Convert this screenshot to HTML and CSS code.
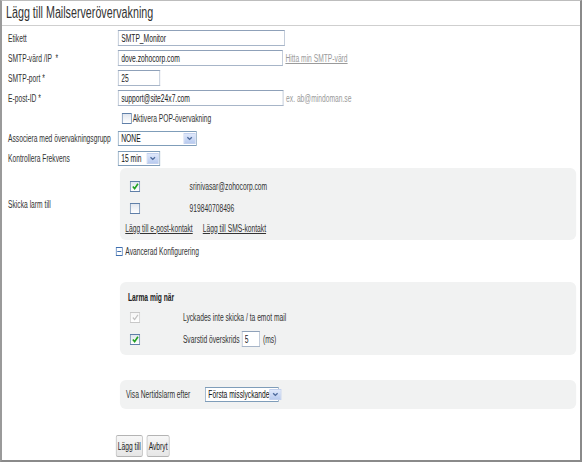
FILE: index.html
```html
<!DOCTYPE html>
<html lang="sv">
<head>
    <meta charset="UTF-8">
    <title>Lägg till Mailserverövervakning</title>
    <link rel="stylesheet" href="styles.css">
</head>
<body>
<div class="frame">
  <div class="sheet">
    <h1 class="title">Lägg till Mailserverövervakning</h1>

    <form class="form" id="mailForm">
        <div class="row">
            <label class="lbl">Etikett</label>
            <div class="field"><input class="txt w-label" type="text" value="SMTP_Monitor"></div>
        </div>
        <div class="row">
            <label class="lbl">SMTP-värd /IP &nbsp;*</label>
            <div class="field">
                <input class="txt w-host" type="text" value="dove.zohocorp.com">
                <a class="hint link" href="#">Hitta min SMTP-värd</a>
            </div>
        </div>
        <div class="row">
            <label class="lbl">SMTP-port *</label>
            <div class="field"><input class="txt w-port" type="text" value="25"></div>
        </div>
        <div class="row">
            <label class="lbl">E-post-ID *</label>
            <div class="field">
                <input class="txt w-mail" type="text" value="support@site24x7.com">
                <span class="hint">ex. ab@mindoman.se</span>
            </div>
        </div>
        <div class="row">
            <span class="lbl"></span>
            <div class="field pop">
                <span class="cb"></span>Aktivera POP-övervakning
            </div>
        </div>
        <div class="row">
            <label class="lbl">Associera med övervakningsgrupp</label>
            <div class="field">
                <span class="sel w-group"><span class="sel-val">NONE</span><span class="sel-btn"></span></span>
            </div>
        </div>
        <div class="row">
            <label class="lbl">Kontrollera Frekvens</label>
            <div class="field">
                <span class="sel w-freq"><span class="sel-val">15 min</span><span class="sel-btn"></span></span>
            </div>
        </div>

        <div class="row row-panel">
            <label class="lbl">Skicka larm till</label>
            <div class="panel contacts">
                <div class="pick"><span class="cb on"></span><span>srinivasar@zohocorp.com</span></div>
                <div class="pick"><span class="cb"></span><span>919840708496</span></div>
                <div class="add-links">
                    <a href="#">Lägg till e-post-kontakt</a>
                    <a href="#">Lägg till SMS-kontakt</a>
                </div>
            </div>
        </div>

        <div class="advanced">
            <span class="toggle"></span>Avancerad Konfigurering
        </div>

        <div class="panel notify">
            <div class="notify-head">Larma mig när</div>
            <div class="pick"><span class="cb on off"></span><span>Lyckades inte skicka / ta emot mail</span></div>
            <div class="pick">
                <span class="cb on"></span>
                <span class="resp">Svarstid överskrids <input class="txt w-ms" type="text" value="5"> (ms)</span>
            </div>
        </div>

        <div class="panel downtime">
            <span class="down-lbl">Visa Nertidslarm efter</span>
            <span class="sel w-down"><span class="sel-val">Första misslyckande</span><span class="sel-btn"></span></span>
        </div>

        <div class="actions">
            <button type="submit" class="btn w-add">Lägg till</button>
            <button type="button" class="btn w-cancel">Avbryt</button>
        </div>
    </form>
  </div>
</div>
</body>
</html>
```

FILE: styles.css
```css
body {
    margin: 0;
    font-family: "Liberation Sans", Arial, sans-serif;
    font-size: 10px;
    color: #333;
    background: #fff;
}
.frame {
    box-sizing: border-box;
    width: 582px;
    height: 462px;
    overflow: hidden;
    border-top: 1px solid #bdbdbd;
    border-left: 2px solid #9a9a9a;
    border-right: 2px solid #8a8a8a;
    border-bottom: 2px solid #8a8a8a;
}
/* the old form is drawn in a narrow, squeezed face: widths below are pre-squeeze */
.sheet {
    width: 863px;
    transform: scaleX(0.67);
    transform-origin: 0 0;
}
.title {
    margin: 0;
    height: 24px;
    padding-left: 6px;
    font-size: 16px;
    font-weight: normal;
    line-height: 23px;
    color: #333;
    border-bottom: 1px solid #cfcfcf;
}
.form {
    padding: 2px 6px 0 9px;
}
.row {
    display: grid;
    grid-template-columns: 164px 1fr;
    align-items: center;
    height: 20px;
}
.lbl {
    white-space: nowrap;
}
.field {
    display: flex;
    align-items: center;
    gap: 4px;
}
.txt {
    box-sizing: border-box;
    height: 16px;
    padding: 0 4px;
    border: 1px solid #a7b5c8;
    border-top-color: #8fa1b9;
    font: inherit;
    color: #222;
    background: #fff;
}
.w-label { width: 249px; }
.w-host { width: 246px; }
.w-port { width: 63px; }
.w-mail { width: 247px; }
.w-ms { width: 27px; padding: 0 3px; }
.hint {
    color: #9a9a9a;
}
.link {
    text-decoration: underline;
}
.pop {
    padding-left: 6px;
    gap: 1px;
}

/* checkboxes */
.cb {
    display: inline-block;
    box-sizing: border-box;
    width: 15px;
    height: 11px;
    border: 1px solid #5f7fa8;
    background: linear-gradient(#e1e6ee, #fff);
    flex: none;
}
.cb.on {
    background-image: url("data:image/svg+xml,%3Csvg xmlns='http://www.w3.org/2000/svg' viewBox='0 0 8 9' preserveAspectRatio='none'%3E%3Cpath d='M1.5 4.5 L3.3 6.6 L6.6 1.8' fill='none' stroke='%2321a121' stroke-width='1.6'/%3E%3C/svg%3E"), linear-gradient(#e1e6ee, #fff);
    background-size: 12px 9px, auto;
    background-position: center, 0 0;
    background-repeat: no-repeat;
}
.cb.off {
    border-color: #c8c8c8;
    background-image: url("data:image/svg+xml,%3Csvg xmlns='http://www.w3.org/2000/svg' viewBox='0 0 8 9' preserveAspectRatio='none'%3E%3Cpath d='M1.5 4.5 L3.3 6.6 L6.6 1.8' fill='none' stroke='%23c0c0c0' stroke-width='1.2'/%3E%3C/svg%3E"), linear-gradient(#f6f6f6, #fff);
}

/* select boxes */
.sel {
    box-sizing: border-box;
    display: inline-flex;
    align-items: center;
    justify-content: space-between;
    height: 15px;
    padding: 0 1px 0 4px;
    border: 1px solid #7f9db9;
    background: #fff;
    color: #111;
    white-space: nowrap;
}
.sel-btn {
    box-sizing: border-box;
    width: 18px;
    height: 11px;
    flex: none;
    border: 1px solid #c3d1ee;
    background: url("data:image/svg+xml,%3Csvg xmlns='http://www.w3.org/2000/svg' viewBox='0 0 12 11' preserveAspectRatio='none'%3E%3Cpath d='M3.5 4 L6 6.6 L8.5 4' fill='none' stroke='%234d6a9c' stroke-width='1.5'/%3E%3C/svg%3E") center / 100% 100% no-repeat, linear-gradient(#dfe8fb, #b9cbef);
}
.w-group { width: 118px; }
.w-freq { width: 63px; }
.w-down { width: 110px; }

/* rounded grey boxes */
.panel {
    background: #f1f2f2;
    border-radius: 9px / 6px;
    margin-left: 3px;
}
.row-panel {
    height: auto;
}
.contacts {
    padding: 7px 0 3px 15px;
}
.pick {
    display: grid;
    grid-template-columns: 89px 1fr;
    align-items: center;
    height: 22px;
}
.add-links {
    display: flex;
    gap: 15px;
    height: 18px;
    align-items: center;
    margin-left: -7px;
}
.add-links a {
    color: #333;
}
.advanced {
    display: flex;
    align-items: center;
    gap: 4px;
    height: 18px;
    margin: 2px 0 0 161px;
}
.toggle {
    box-sizing: border-box;
    width: 10px;
    height: 9px;
    border: 1px solid #3f6fb0;
    background: linear-gradient(#3f6fb0, #3f6fb0) center / 6px 1px no-repeat;
}
.notify {
    margin: 22px 0 0 167px;
    padding: 8px 0 5px 15px;
}
.notify .pick {
    grid-template-columns: 79px 1fr;
}
.notify-head {
    font-weight: bold;
    height: 16px;
    line-height: 16px;
    margin-left: -3px;
    color: #222;
}
.resp {
    display: flex;
    align-items: center;
    gap: 4px;
}
.downtime {
    display: flex;
    align-items: center;
    height: 29px;
    margin: 25px 0 0 167px;
    padding-left: 9px;
}
.down-lbl {
    width: 118px;
}
.actions {
    display: flex;
    gap: 6px;
    margin: 26px 0 0 161px;
}
.btn {
    height: 22px;
    padding: 0;
    font: inherit;
    color: #222;
    background: linear-gradient(#f7f7f7, #e6e6e6);
    border: 1px solid #b4b4b4;
    border-radius: 3px / 2px;
}
.w-add { width: 40px; }
.w-cancel { width: 34px; }
```
